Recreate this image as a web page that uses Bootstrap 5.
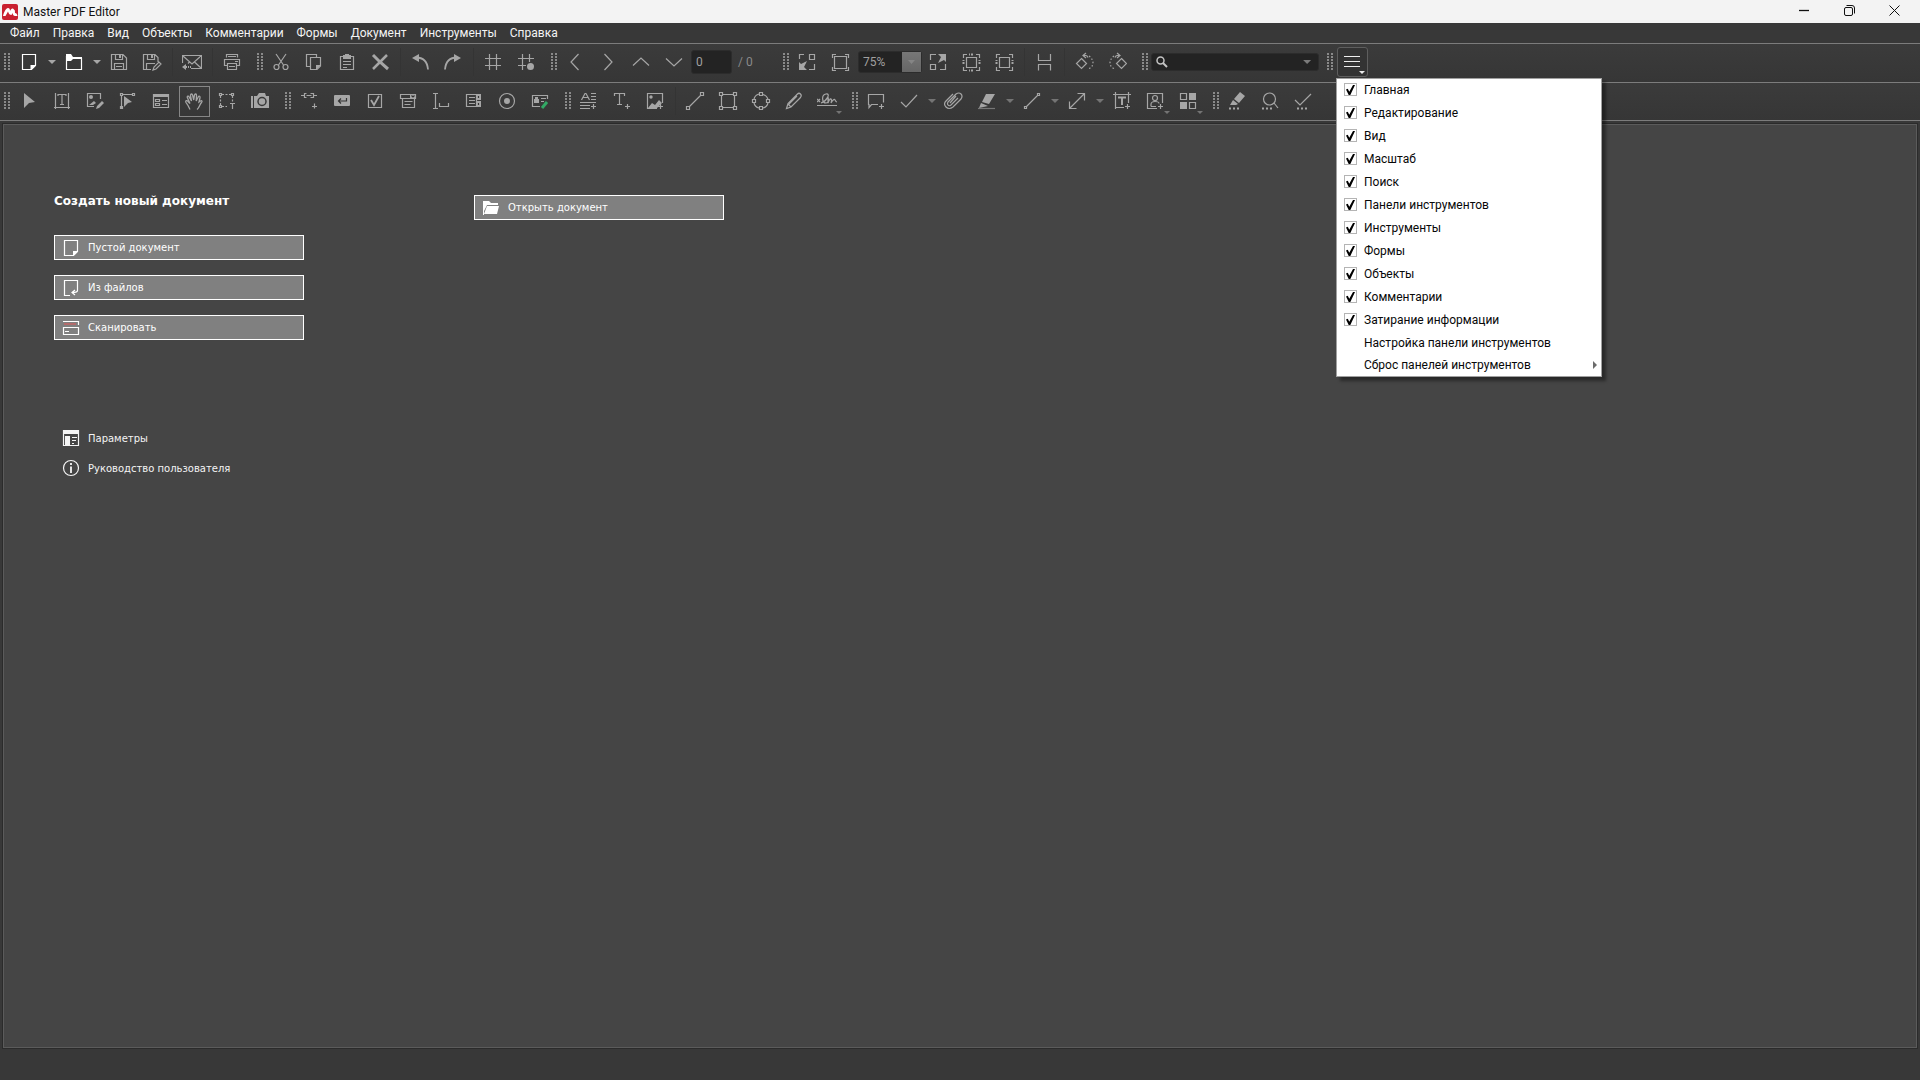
<!DOCTYPE html>
<html lang="ru">
<head>
<meta charset="utf-8">
<meta name="viewport" content="width=device-width, initial-scale=1">
<title>Master PDF Editor</title>
<link href="https://cdn.jsdelivr.net/npm/bootstrap@5.3.0/dist/css/bootstrap.min.css" rel="stylesheet">
<style>
:root{--ui:Roboto,"Noto Sans",sans-serif;--line:#7c7c7c;--icon:#a6a6a6}
body{background:#383838;color:#fff;font-family:var(--ui);font-size:12px;line-height:16px}
button,input,select{font:inherit;color:inherit}
svg{display:block;flex:none;fill:none;stroke:currentColor;stroke-width:1.2}
svg .f{fill:currentColor;stroke:none}
.titlebar{height:23px;background:#f3f3f3;color:#111;padding:0 3px 0 2px}
.titlebar h1{font-size:12px;line-height:16px;font-weight:400;margin-left:5px}
.winbtn{width:45px;height:23px;border:0;background:none;padding:0 0 3px;display:flex;align-items:center;justify-content:center}
.winbtn svg{stroke-width:1}
.menubar{height:21px;border-bottom:1px solid var(--line);padding:0 10px;gap:13px}
.menubar a{color:#f4f4f4;text-decoration:none;line-height:20px}
.tools{background:linear-gradient(#3b3b3b,#363636);border-bottom:1px solid var(--line);padding:3px 0 0 4px;color:var(--icon)}
.tools-a{height:39px}.tools-b{height:38px}
.grip{width:6px;height:18px;margin:6px 2px 0 8px;background:repeating-linear-gradient(#0000 0 2px,#393939 2px 3px),repeating-linear-gradient(90deg,#8a8a8a 0 2px,#0000 2px 4px)}
.grip-first{margin-left:0;margin-right:3px}
.grip-near{margin-right:4px}
.tool{width:33px;height:30px;border:0;background:none;padding:0 0 0 6px;display:flex;align-items:center;position:relative}
.tool-drop{width:12px;height:30px;border:0;background:none;padding:0}
.tool-drop::before,.corner::after{content:"";display:block;margin:auto;width:8px;height:4px;background:currentColor;clip-path:polygon(0 0,100% 0,50% 100%)}
.corner::after{position:absolute;right:2px;bottom:2px;width:6px;height:3px}
.corner-low::after{background:#747474}
.dim{color:#747474}
.bright{color:#fff}
.picked{width:31px;height:31px;margin:0 1px;padding-left:4px;border:1px solid #868686}
.rule{width:1px;height:28px;margin:1px 3px;background:#343434}
.well{background:#232323;border:1px solid #2c2c2c;border-radius:3px;color:#a0a0a0}
.page-no{width:41px;height:24px;padding:0 4px;margin-top:3px}
.page-total{width:51px;padding:7px 0 0 6px;color:#8a8a8a}
.zoombox{position:relative;width:64px;height:22px;margin:4px 0 0 1px}
.zoombox select{appearance:none;width:64px;height:22px;padding:0 4px}
.zoombox::after{content:"";position:absolute;right:1px;top:1px;width:19px;height:20px;pointer-events:none;background:linear-gradient(#777,#666)}
.zoombox::before{content:"";position:absolute;z-index:1;right:7px;top:9px;width:7px;height:4px;background:#858585;clip-path:polygon(0 0,100% 0,50% 100%);pointer-events:none}
.finder{width:168px;height:18px;margin:6px 0 0 1px;padding:0 2px 0 4px}
.finder input{min-width:0;background:none;border:0;outline:0;padding:0 4px;height:16px}
.finder .tool-drop{height:16px;margin-right:4px;color:#7b7b7b}
.burger{width:31px;border:1px solid #5e5e5e;border-radius:3px;background:#333;color:#eee;padding-left:5px}
.panel-menu{position:absolute;z-index:5;left:-1px;top:31px;width:266px;background:#fff;color:#080808;border:1px solid #a0a0a0;box-shadow:4px 4px 3px #0006;padding:0}
.panel-menu label,.panel-menu button{display:flex;align-items:center;width:100%;height:23px;padding:0 0 0 7px;gap:7px;border:0;background:none;text-align:left}
.panel-menu li:first-child{margin-top:-1px}
.panel-menu button{padding:0 4px 0 27px}
.panel-menu li:last-child button{height:22px}
.panel-menu input{appearance:none;width:13px;height:13px;border:1px solid #b4b4b4;margin:0;flex:none}
.panel-menu input:checked::before{content:"";display:block;width:9px;height:10px;margin:1px;background:#000;clip-path:polygon(0 45%,20% 38%,36% 67%,78% 0,100% 0,48% 100%,30% 100%)}
.sub-arrow{width:4px;height:8px;background:#6b6b6b;clip-path:polygon(0 0,100% 50%,0 100%)}
.workspace{background:#454545;border:1px solid #5b5b5b;outline:1px solid #2b2b2b;margin:3px 3px 32px;padding:66px 50px;gap:170px}
.start-col{width:250px;font-family:"DejaVu Sans",sans-serif;font-size:10px;line-height:17px}
.start-col h2{font-size:12px;line-height:20px;font-weight:700;margin:0 0 24px}
.start-btn{display:flex;align-items:center;gap:7px;width:100%;height:25px;border:1px solid #fff;background:#808080;color:#fff;padding:0 6px;margin:0 0 15px}
.start-link{display:flex;align-items:center;gap:7px;height:30px;padding-left:7px;color:#f4f4f4;text-decoration:none}
.start-links{margin-top:83px}
</style>
<script src="https://cdn.jsdelivr.net/npm/bootstrap@5.3.0/dist/js/bootstrap.bundle.min.js"></script>
</head>
<body class="d-flex flex-column min-vh-100">
<header class="titlebar d-flex align-items-center">
  <svg width="16" height="16" viewBox="0 0 16 16"><rect width="16" height="16" rx="2" fill="#c9202f" stroke="none"/><path fill="#fff" stroke="none" d="M1 12C2 8 4 4 6 4q2 0 2 3c1-2 2-3 3.500-2q2 1 1.500 4 2 0 2.500 3H13q-2 0-2.500-3L9.500 11Q7 11 6 7.500L3.500 12z"/></svg>
  <h1 class="mb-0 me-auto">Master PDF Editor</h1>
  <button class="winbtn" aria-label="Свернуть"><svg width="11" height="11"><path d="M0 5.500h10" stroke-width="1.300"/></svg></button>
  <button class="winbtn" aria-label="Восстановить"><svg width="11" height="11"><rect x=".5" y="2.500" width="8" height="8" rx="1.500"/><path d="M2.500.5H8q2.500 0 2.500 2.500v5.500"/></svg></button>
  <button class="winbtn" aria-label="Закрыть"><svg width="11" height="11"><path d="M.5.5l10 10m0-10l-10 10"/></svg></button>
</header>
<nav class="menubar d-flex" aria-label="Меню">
  <a href="#">Файл</a><a href="#">Правка</a><a href="#">Вид</a><a href="#">Объекты</a><a href="#">Комментарии</a><a href="#">Формы</a><a href="#">Документ</a><a href="#">Инструменты</a><a href="#">Справка</a>
</nav>
<div class="tools tools-a d-flex align-items-start" role="toolbar" aria-label="Главная">
  <span class="grip grip-first"></span>
  <button class="tool bright" aria-label="Создать"><svg width="20" height="20"><path d="M3.500 2.500h13v11l-4 4h-9z"/><path class="f" d="M11.500 18v-5H17z"/></svg></button>
  <button class="tool-drop" aria-label="Варианты создания"></button>
  <button class="tool bright" aria-label="Открыть"><svg width="20" height="20"><path d="M2.500 4v13.500h15V6.500h-9"/><path class="f" d="M2 2h5l2 3h9v2H9L7 9H2z"/></svg></button>
  <button class="tool-drop" aria-label="Недавние"></button>
  <button class="tool" aria-label="Сохранить"><svg width="20" height="20"><path d="M2.500 2.500H14l3.500 3.500v11.500h-15zM6.500 2.500v5h7v-5M5.500 17.500v-6h9v6M7 14.500h6"/><path class="f" d="M10 3h2v3h-2z"/></svg></button>
  <button class="tool" aria-label="Сохранить как"><svg width="20" height="20"><path d="M9 17.500H1.500v-15H13l3 3V10M5.500 2.500v5h7v-5M4.500 17.500v-6H13M11 18l1-3 5-5 2 2-5 5z"/><path class="f" d="M9 3h2v3H9z"/></svg></button>
  <span class="rule"></span>
  <button class="tool" aria-label="Отправить"><svg width="20" height="20"><path d="M.5 11V3.500h19v13H9M1 4l9 8 9-8M7.500 10L6 11.500M12.500 10l6.500 6"/><path class="f" d="M0 15l4-3v2h1v2H4v2zM6 14h1v2H6zM8 14h1v2H8z"/></svg></button>
  <span class="rule"></span>
  <button class="tool" aria-label="Печать"><svg width="20" height="20"><path d="M4.500 5.500v-3h11v3M6 4.500h8M5 13.500H2.500v-6h15v6H15M5.500 11.500h9v6h-9zM7 14.500h6"/><path class="f" d="M13 9h3v1h-3z"/></svg></button>
  <span class="grip"></span>
  <button class="tool" aria-label="Вырезать"><svg width="20" height="20"><path d="M5 2l7.500 11M15 2L7.500 13"/><circle cx="5.500" cy="15" r="2.500"/><circle cx="14.500" cy="15" r="2.500"/></svg></button>
  <button class="tool" aria-label="Копировать"><svg width="20" height="20"><path d="M6 14.500H2.500v-12h10V5M6.500 5.500h10V14l-3.500 3.500H6.500z"/><path class="f" d="M12 18v-5h5z"/></svg></button>
  <button class="tool" aria-label="Вставить"><svg width="20" height="20"><path d="M3.500 4.500h13v13h-13zM6 9.500h8M6 12.500h8M6 15.500h4"/><path class="f" d="M6 3h2V2h4v1h2v4H6z"/></svg></button>
  <button class="tool" aria-label="Удалить"><svg width="20" height="20"><path d="M3 3l7 7 8 7" stroke-width="3"/><path d="M17 3L3 17" stroke-width="2.500"/></svg></button>
  <span class="rule"></span>
  <button class="tool" aria-label="Отменить"><svg width="20" height="20"><path d="M6 5.500q11 0 12 12" stroke-width="1.800"/><path class="f" d="M2 6l7-4v8z"/></svg></button>
  <button class="tool" aria-label="Повторить"><svg width="20" height="20"><path d="M14 5.500q-11 0-12 12" stroke-width="1.800"/><path class="f" d="M18 6l-7-4v8z"/></svg></button>
  <span class="rule"></span>
  <button class="tool" aria-label="Сетка"><svg width="20" height="20"><path d="M6.500 2v16M13.500 2v16M2 6.500h16M2 13.500h16"/></svg></button>
  <button class="tool" aria-label="Привязка"><svg width="20" height="20"><path d="M6.500 2v16M13.500 2v8M2 6.500h16M2 13.500h8"/><circle class="f" cx="14.500" cy="14.500" r="3.500"/></svg></button>
  <span class="grip"></span>
  <button class="tool" aria-label="Назад"><svg width="20" height="20"><path d="M13.500 2L6 10l7.500 8"/></svg></button>
  <button class="tool" aria-label="Вперёд"><svg width="20" height="20"><path d="M6.500 2L14 10l-7.500 8"/></svg></button>
  <button class="tool" aria-label="Предыдущая страница"><svg width="20" height="20"><path d="M2 13.500L10 6l8 7.500"/></svg></button>
  <button class="tool" aria-label="Следующая страница"><svg width="20" height="20"><path d="M2 6.500L10 14l8-7.500"/></svg></button>
  <input class="well page-no" type="text" value="0" aria-label="Страница">
  <span class="page-total">/ 0</span>
  <span class="grip ms-0"></span>
  <button class="tool" aria-label="По размеру"><svg width="20" height="20"><path d="M7 2.500H2.500V7M12.500 2.500h5v5h-5zM17.500 12v5.500H12"/><path class="f" d="M2 18v-8l2 2 6-3-3 6 3 3z"/></svg></button>
  <button class="tool" aria-label="Страница целиком"><svg width="20" height="20"><path d="M4.500 4.500h12v12h-12zM2.500 6V2.500H6M15 2.500h3.500V6M18.500 15v3.500H15M6 18.500H2.500V15"/></svg></button>
  <span class="zoombox"><select class="well" aria-label="Масштаб"><option>75%</option><option>100%</option></select></span>
  <button class="tool" aria-label="Увеличить"><svg width="20" height="20"><path d="M2.500 8V2.500H8M2.500 12.500h5v5h-5zM12 17.500h5.500V12"/><path class="f" d="M18 2v8l-2-2-6 3 3-6-3-3z"/></svg></button>
  <button class="tool" aria-label="По содержимому"><svg width="20" height="20"><path d="M5.500 5.500h10v10h-10zM2.500 6V2.500H6M15 2.500h3.500V6M18.500 15v3.500H15M6 18.500H2.500V15"/><path d="M8 2.500h5M8 18.500h5M2.500 8v5M18.500 8v5" stroke-width="2" stroke-dasharray="1 1 2 1"/></svg></button>
  <button class="tool" aria-label="По ширине"><svg width="20" height="20"><path d="M5.500 5.500h10v10h-10zM2.500 6V2.500H6M15 2.500h3.500V6M18.500 15v3.500H15M6 18.500H2.500V15"/><path d="M2.500 8v5M18.500 8v5" stroke-width="2" stroke-dasharray="1 1 2 1"/></svg></button>
  <span class="rule"></span>
  <button class="tool" aria-label="Непрерывно"><svg width="20" height="20"><path d="M4.500 2v6.500h12V2M4.500 18.500v-6h12v6"/></svg></button>
  <span class="rule"></span>
  <button class="tool" aria-label="Повернуть влево"><svg width="20" height="20"><path d="M7.500 6.500l5 5-5 5-5-5zM9 3.500h3q1 0 2 2M12 1L9 3.500 12 6"/><path d="M15 4q4 3 4 7t-5 6" stroke-dasharray="1.500 2"/></svg></button>
  <button class="tool" aria-label="Повернуть вправо"><svg width="20" height="20"><path d="M14.500 6.500l5 5-5 5-5-5zM13 3.500h-3q-1 0-2 2M10 1l3 2.500L10 6"/><path d="M7 4q-4 3-4 7t5 6" stroke-dasharray="1.500 2"/></svg></button>
  <span class="grip"></span>
  <div class="finder well d-flex align-items-center"><svg width="12" height="12" color="#c4c4c4"><circle cx="4.500" cy="4.500" r="3.500" stroke-width="1.500"/><path d="M7 7l4 4" stroke-width="2"/></svg><input class="flex-fill" type="text" aria-label="Поиск"><button class="tool-drop" aria-label="Параметры поиска"></button></div>
  <span class="grip grip-near"></span>
  <div class="position-relative">
    <button class="tool burger corner" aria-label="Панели" aria-expanded="true"><svg width="20" height="20"><path d="M1 4.500h16M1 9.500h16M1 14.500h16"/></svg></button>
    <ul class="panel-menu list-unstyled m-0">
      <li><label><input type="checkbox" checked>Главная</label></li>
      <li><label><input type="checkbox" checked>Редактирование</label></li>
      <li><label><input type="checkbox" checked>Вид</label></li>
      <li><label><input type="checkbox" checked>Масштаб</label></li>
      <li><label><input type="checkbox" checked>Поиск</label></li>
      <li><label><input type="checkbox" checked>Панели инструментов</label></li>
      <li><label><input type="checkbox" checked>Инструменты</label></li>
      <li><label><input type="checkbox" checked>Формы</label></li>
      <li><label><input type="checkbox" checked>Объекты</label></li>
      <li><label><input type="checkbox" checked>Комментарии</label></li>
      <li><label><input type="checkbox" checked>Затирание информации</label></li>
      <li><button>Настройка панели инструментов</button></li>
      <li><button class="justify-content-between">Сброс панелей инструментов<span class="sub-arrow"></span></button></li>
    </ul>
  </div>
</div>
<div class="tools tools-b d-flex align-items-start" role="toolbar" aria-label="Инструменты">
  <span class="grip grip-first"></span>
  <button class="tool" aria-label="Выделение"><svg width="20" height="20"><path class="f" d="M5 2l11 9-6 1-5 5z"/></svg></button>
  <button class="tool" aria-label="Редактировать текст"><svg width="20" height="20"><path d="M3.500 2v16M16.500 2v16M2 16.500h16M6 5V3.500h8V5M10 4v10M8 13.500h4"/></svg></button>
  <button class="tool" aria-label="Редактировать изображение"><svg width="20" height="20"><path d="M9 15.500H2.500v-13h13V8"/><circle class="f" cx="6" cy="6" r="2"/><path class="f" d="M4 14l5-4 2 2-3 2zM11 18l1-3 5-5 2 2-5 5z"/></svg></button>
  <button class="tool" aria-label="Узлы"><svg width="20" height="20"><path d="M3.500 5v12M5 3.500h9M2.500 2.500h2v2h-2zM14.500 2.500h2v2h-2zM2.500 15.500h2v2h-2z"/><path class="f" d="M6 5l8 6-4 1-4 4z"/></svg></button>
  <button class="tool" aria-label="Редактор форм"><svg width="20" height="20"><path d="M2.500 3.500h15v13h-15zM4.500 8.500h4v2h-4zM4.500 12.500h4v2h-4zM11 9.500h5M11 13.500h5"/><path class="f" d="M2 3h16v3H2z"/></svg></button>
  <button class="tool picked" aria-label="Рука" aria-pressed="true"><svg width="20" height="20"><path d="M6 17.500l-2-4-2-3c-1-2 1-2.500 2-1l2 2L3.500 6c-1-2 1-2.500 1.800-.8L7.500 9 6.500 3.500c0-2 1.800-2 2.200 0L9.700 8l.8-5c.4-1.500 2-1.300 2 .3L12.200 9l2-4c.8-1.500 2.300-.7 1.800.8L15 10l1.500-1c1.500-.8 2 .5 1 1.500-2 2-2 5-4.500 7" stroke-width="1.300"/></svg></button>
  <button class="tool" aria-label="Выделить текст"><svg width="20" height="20"><path d="M5 3.500h9M3.500 5v9M15.500 5v6M5 15.500h5" stroke-dasharray="2 1.500"/><path d="M2.500 2.500h2v2h-2zM14.500 2.500h2v2h-2zM2.500 14.500h2v2h-2zM13 12.500h5M15.500 12.500V18"/></svg></button>
  <button class="tool" aria-label="Снимок"><svg width="20" height="20"><path class="f" d="M1 5h2v12H1zM4 5h3l2-3h6l1 3h3v12H4z"/><circle cx="12" cy="10.500" r="4" fill="#a6a6a6" stroke="#393939" stroke-width="1.500"/></svg></button>
  <span class="grip"></span>
  <button class="tool" aria-label="Ссылка"><svg width="20" height="20"><path d="M2 4.500h3M7.500 2.500h-2v4h2M7.500 4.500h5M11.500 2.500h3v4h-3M15 4.500h3M15.500 12.500v5M13 15.500h5"/></svg></button>
  <button class="tool" aria-label="Кнопка"><svg width="20" height="20"><rect class="f" x="2" y="4" width="16" height="11" rx="1"/><path d="M14.500 7v3H7M9 7.500L6.500 10 9 12.500" stroke="#333"/></svg></button>
  <button class="tool" aria-label="Флажок"><svg width="20" height="20"><path d="M3.500 3.500h13v13h-13z"/><path d="M6 9l3 5 5-9" stroke-width="1.800"/></svg></button>
  <button class="tool" aria-label="Список"><svg width="20" height="20"><path d="M2.500 3.500h15v4h-15zM4.500 7.500v9h12v-9M6.500 10.500h8M6.500 13.500h6"/><path class="f" d="M12 3h6v5h-6z"/><path d="M13.500 4.500L15 6l1.500-1.500" stroke="#333"/></svg></button>
  <button class="tool" aria-label="Текстовое поле"><svg width="20" height="20"><path d="M2 2.500h5M2 17.500h5M4.500 2.500v15M8.500 12v3.500h9V12"/></svg></button>
  <button class="tool" aria-label="Поле со списком"><svg width="20" height="20"><path d="M2.500 3.500h10v12h-10zM5 6.500h6M5 9.500h6M5 12.500h6"/><path class="f" d="M12 3h5v6h-5zM12 10h5v6h-5z"/><path d="M14.500 5v2M14.500 12v2" stroke="#333"/></svg></button>
  <button class="tool" aria-label="Переключатель"><svg width="20" height="20"><circle cx="10" cy="10" r="7.500"/><circle class="f" cx="10" cy="10" r="3"/></svg></button>
  <button class="tool" aria-label="Подпись"><svg width="20" height="20"><path d="M10 15.500H2.500v-11h15V8M11 7.500h5M11 10.500h3"/><path class="f" d="M4 8h1V6h3v2h1v4H4z"/><path d="M12 17l5-6" stroke="#32a965" stroke-width="3"/></svg></button>
  <span class="grip"></span>
  <button class="tool" aria-label="Текст"><svg width="20" height="20"><path d="M2.500 9L6 2.500h1L10.500 9M4 6.500h5M12 2.500h5M12 5.500h5M12 8.500h5M1 11.500h16M1 14.500h10M1 17.500h10M14.500 13v5M12 15.500h5"/></svg></button>
  <button class="tool" aria-label="Вставить текст"><svg width="20" height="20"><path d="M2.500 5V2.500h10V5M7.500 2.500v11M5 13.500h5M15.500 13v5M13 15.500h5"/></svg></button>
  <button class="tool" aria-label="Вставить изображение"><svg width="20" height="20"><path d="M12 17.500H2.500v-15h15V12M15.500 13v5M13 15.500h5"/><circle class="f" cx="6" cy="6" r="1.700"/><path class="f" d="M3 17l4-5 3 2 4-5 3 3-5 5z"/></svg></button>
  <span class="rule"></span>
  <button class="tool" aria-label="Линия"><svg width="20" height="20"><path d="M4 16L16 4M1.500 15.500h3v3h-3zM15.500 1.500h3v3h-3z"/></svg></button>
  <button class="tool" aria-label="Прямоугольник"><svg width="20" height="20"><path d="M5 3.500h10M5 16.500h10M3.500 5v10M16.500 5v10M1.500 1.500h3v3h-3zM15.500 1.500h3v3h-3zM1.500 15.500h3v3h-3zM15.500 15.500h3v3h-3z"/></svg></button>
  <button class="tool" aria-label="Эллипс"><svg width="20" height="20"><path d="M12 3.500q4 1 5 5M17 12q-1 4-5 5M8 17q-4-1-5-5M3 8q1-4 5-5M8.500 1.500h3v3h-3zM8.500 15.500h3v3h-3zM1.500 8.500h3v3h-3zM15.500 8.500h3v3h-3z"/></svg></button>
  <button class="tool" aria-label="Карандаш"><svg width="20" height="20"><path d="M2.500 17.500l1.500-5L13.500 3q1.500-1.500 3 0t0 3.500L7 16zM4 13l3 3M13 5l-8 8"/></svg></button>
  <button class="tool corner corner-low" aria-label="Рукописная подпись"><svg width="20" height="20"><path d="M0 8l3 3M3 8l-3 3M4 12C10 10 14 2 9 3s-4 9 0 9 2-5 2-6v6q2-5 3-4t0 4q3-5 4-3t2 2M0 14.500h20"/></svg></button>
  <span class="grip"></span>
  <button class="tool" aria-label="Заметка"><svg width="20" height="20"><path d="M12 13.500H5.500l-2.500 3v-3h-.5v-10h15v8M15.500 13v5M13 15.500h5"/></svg></button>
  <button class="tool" aria-label="Отметка"><svg width="20" height="20"><path d="M2 11l5 5L18 4"/></svg></button>
  <button class="tool-drop dim" aria-label="Виды отметок"></button>
  <button class="tool" aria-label="Вложение"><svg width="20" height="20"><path d="M14 7l-7 7q-2 1.500-3 0t0-3l8-8q3-2 5 0t0 5l-8 8q-4 3-7 0t0-6l7-7M12 5l-6 7"/></svg></button>
  <button class="tool" aria-label="Маркер"><svg width="20" height="20"><path class="f" d="M9 3h9l-6 10-7-2zM4 12l7 3-9 2z"/><path d="M1 17.500h17" stroke="#777"/></svg></button>
  <button class="tool-drop dim" aria-label="Виды маркера"></button>
  <button class="tool" aria-label="Отрезок"><svg width="20" height="20"><path d="M4 16L16 4M2.500 15.500h2v2h-2zM15.500 2.500h2v2h-2z"/></svg></button>
  <button class="tool-drop dim" aria-label="Виды линий"></button>
  <button class="tool" aria-label="Измерение"><svg width="20" height="20"><path d="M3 17L17 3M10.500 2.500h7v7M2.500 10.500v7h7"/></svg></button>
  <button class="tool-drop dim" aria-label="Виды измерений"></button>
  <button class="tool" aria-label="Надпись"><svg width="20" height="20"><path d="M12 16.500H3.500v-13h13V12M1 3.500h18M3.500 1v17M16.500 1v3M15.500 13v5M13 15.500h5"/><path d="M6 6.500h8M10 6v8" stroke-width="2"/></svg></button>
  <button class="tool corner corner-low" aria-label="Штамп"><svg width="20" height="20"><path d="M12 17.500H2.500v-15h15V12M15.500 13v5M13 15.500h5M6 15.500v-2q0-3 4-3t4 2M6 15.500h5"/><circle cx="10" cy="7" r="2.500"/></svg></button>
  <button class="tool corner corner-low" aria-label="Палитра"><svg width="20" height="20"><path d="M2.500 2.500h6v6h-6zM11.500 11.500h6v6h-6z"/><path class="f" d="M11 2h7v7h-7zM2 11h7v7H2z"/></svg></button>
  <span class="grip"></span>
  <button class="tool" aria-label="Затереть"><svg width="20" height="20"><path class="f" d="M13 1l5 4-6 7-5-4zM6 9l5 4-2 1H3z"/><path d="M2 17.500h11" stroke-width="2" stroke-dasharray="2 2"/></svg></button>
  <button class="tool" aria-label="Найти и затереть"><svg width="20" height="20"><circle cx="9.500" cy="8" r="6"/><path d="M14 12l4 5"/><path d="M2 17.500h11" stroke-width="2" stroke-dasharray="2 2"/></svg></button>
  <button class="tool" aria-label="Применить затирание"><svg width="20" height="20"><path d="M2 9l5 5L18 3"/><path d="M4 17.500h11" stroke-width="2" stroke-dasharray="2 2"/></svg></button>
</div>
<main class="workspace d-flex flex-fill align-items-start">
  <section class="start-col">
    <h2>Создать новый документ</h2>
    <button class="start-btn"><svg width="20" height="20"><path d="M3.500 2.500h13v11l-4 4h-9z"/><path class="f" d="M12 18v-5h5z"/></svg>Пустой документ</button>
    <button class="start-btn"><svg width="20" height="20"><path d="M9 17.500H3.500v-15h13v10q0 2-5 2M14 12l-3 2.500 3 2.500"/></svg>Из файлов</button>
    <button class="start-btn"><svg width="20" height="20"><path d="M2 3.500h15.500V7M2.500 10v-.5h15v7h-15zM4 13.500h4"/><path d="M3 6h12" stroke="#d65f5f"/></svg>Сканировать</button>
    <div class="start-links">
      <a class="start-link" href="#"><svg width="20" height="20"><path d="M2.500 2.500h15v15h-15zM11 9.500h5M11 12.500h4M11 15.500h2"/><path class="f" d="M2 2h16v4H2zM4 8h5v9H4z"/></svg>Параметры</a>
      <a class="start-link" href="#"><svg width="20" height="20"><circle cx="10" cy="10" r="7.500"/><path d="M10 8.500V15M10 5v2" stroke-width="1.800"/></svg>Руководство пользователя</a>
    </div>
  </section>
  <section class="start-col pt-1">
    <button class="start-btn"><svg width="20" height="20"><path class="f" d="M2 3h6l2 2h7v2H6l-3 6v4H2zM6 8h12l-2 8H3z"/></svg>Открыть документ</button>
  </section>
</main>
</body>
</html>
